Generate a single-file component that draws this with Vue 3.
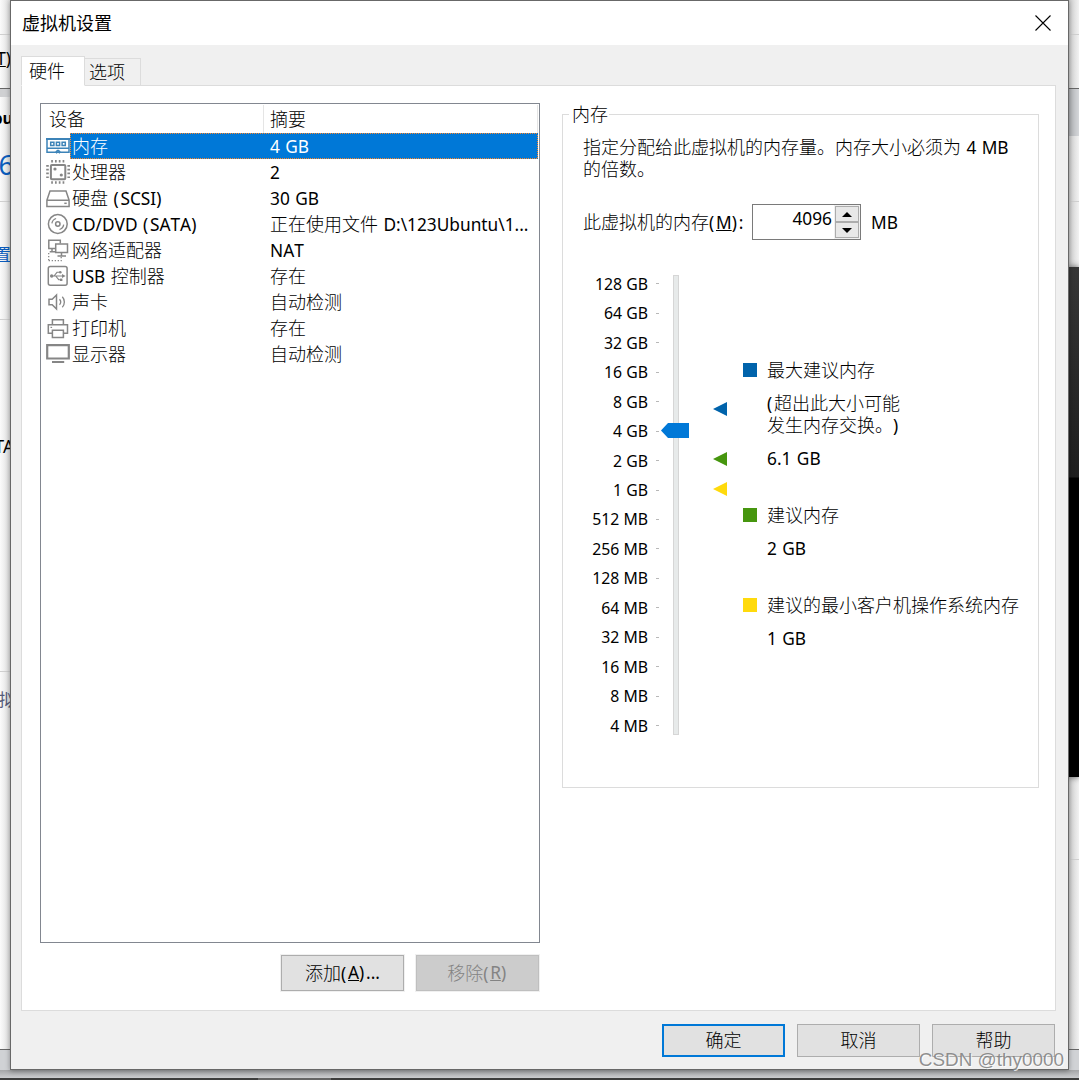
<script setup>
import { h, ref, computed } from 'vue';

const runClass = (part) => {
  if (/^[()]$/.test(part)) return 'en paren';
  return /[\x20-\x7e]/.test(part) ? 'en' : 'zh';
};

// latin and CJK runs use different faces and sizes
const Mixed = ({ text }) =>
  h(
    'span',
    { class: 'mixed' },
    text
      .split(/([()]|[\x20-\x27\x2a-\x7e]+)/)
      .filter(Boolean)
      .map((part) => h('span', { class: runClass(part) }, part))
  );
Mixed.props = ['text'];

const devices = [
  { id: 'memory', name: '内存', summary: '4 GB' },
  { id: 'cpu', name: '处理器', summary: '2' },
  { id: 'disk', name: '硬盘 (SCSI)', summary: '30 GB' },
  { id: 'cd', name: 'CD/DVD (SATA)', summary: '正在使用文件 D:\\123Ubuntu\\1...' },
  { id: 'network', name: '网络适配器', summary: 'NAT' },
  { id: 'usb', name: 'USB 控制器', summary: '存在' },
  { id: 'sound', name: '声卡', summary: '自动检测' },
  { id: 'printer', name: '打印机', summary: '存在' },
  { id: 'display', name: '显示器', summary: '自动检测' },
];

const sizes = [
  '128 GB', '64 GB', '32 GB', '16 GB', '8 GB', '4 GB', '2 GB', '1 GB',
  '512 MB', '256 MB', '128 MB', '64 MB', '32 MB', '16 MB', '8 MB', '4 MB',
];

const markers = [
  { color: '#0063ab', top: 127 },
  { color: '#46960e', top: 177 },
  { color: '#ffda0c', top: 207 },
];

const selected = ref('memory');
const memory = ref(4096);

const thumbStyle = computed(() => {
  const step = 17 - Math.log2(memory.value);
  return { top: `${Math.round(step * 29.47 + 0.6)}px` };
});

const changeMemory = (delta) => {
  memory.value = Math.min(131072, Math.max(4, memory.value + delta));
};
</script>

<template>
  <div class="desktop">
    <div class="behind left">
      <i class="rule" style="top: 34px"></i>
      <i class="rule dark" style="top: 88px"></i>
      <i class="band narrow"></i>
      <span class="peek menu"><u>T</u>)</span>
      <span class="peek bold">bu</span>
      <span class="peek six">6</span>
      <i class="rule" style="top: 201px"></i>
      <span class="peek link">置</span>
      <i class="rule" style="top: 319px"></i>
      <span class="peek sata">TA</span>
      <i class="rule" style="top: 671px"></i>
      <span class="peek nav">拟</span>
    </div>
    <div class="behind right">
      <i class="rule" style="top: 34px"></i>
      <i class="rule dark" style="top: 88px"></i>
      <i class="band"></i>
      <i class="rule" style="top: 201px"></i>
      <i class="screen"></i>
      <i class="rule" style="top: 859px"></i>
    </div>
    <div class="statusbar"></div>
    <div class="taskbar"><i></i></div>

    <div class="dialog">
      <header class="titlebar">
        <span class="title">虚拟机设置</span>
        <svg class="close" width="16" height="16" viewBox="0 0 16 16">
          <path d="M.5 .5 15.5 15.5M15.5 .5 .5 15.5" stroke="#000" stroke-width="1.1" />
        </svg>
      </header>

      <div class="tabs">
        <div class="tab active"><Mixed text="硬件" /></div>
        <div class="tab"><Mixed text="选项" /></div>
      </div>

      <main class="panel">
        <section class="hardware">
          <div class="list">
            <div class="list-head">
              <div class="col-name"><Mixed text="设备" /></div>
              <div class="col-summary"><Mixed text="摘要" /></div>
            </div>
            <div
              v-for="device in devices"
              :key="device.id"
              class="row"
              :class="{ selected: selected === device.id }"
              @click="selected = device.id"
            >
              <svg class="icon" width="24" height="26" viewBox="0 0 24 26" fill="none" stroke="#868686" stroke-width="1.5">
                <g v-if="device.id === 'memory'" stroke="#3c83b8">
                  <path d="M0 6h24" stroke-width="2" />
                  <path d="M1 6v13.2h8.5l2 -1.7h1l2 1.7H23V6M1 15.2h22" />
                  <path d="M4.7 9.3h3.2v3.2H4.7zM10.4 9.3h3.2v3.2h-3.2zM16.1 9.3h3.2v3.2h-3.2z" />
                  <path d="M10 20.2l2-1.5 2 1.5" />
                </g>
                <g v-else-if="device.id === 'cpu'">
                  <rect x="4.9" y="5.9" width="14.4" height="14.4" rx="1" stroke-width="2" />
                  <path d="M5.2 2.2h14.5M5.2 23.5h14.5" stroke-width="2.6" stroke-dasharray="1.7 2.1" />
                  <path d="M1.5 6v14.5M22.7 6v14.5" stroke-width="2.6" stroke-dasharray="1.7 2.1" />
                  <circle cx="9" cy="10" r="1.6" fill="#868686" stroke="none" />
                  <circle cx="15.3" cy="16" r="1.6" fill="#868686" stroke="none" />
                </g>
                <g v-else-if="device.id === 'disk'">
                  <path d="M.9 15.2 4 6h16l3.1 9.2v6.3H.9zM.9 15.2h22.2" />
                  <path d="M18.3 18.3h2.4" />
                </g>
                <g v-else-if="device.id === 'cd'">
                  <circle cx="11.8" cy="13" r="9.4" />
                  <circle cx="11.8" cy="13" r="2.2" />
                  <path d="M5.9 12.3a6 6 0 0 1 4.2-4.8M17.7 13.7a6 6 0 0 1-4.2 4.8" stroke-width="1.3" />
                </g>
                <g v-else-if="device.id === 'network'">
                  <path d="M9 11.5H2.8V3.2h11.5v3.2M6 11.5v3.2M3.7 14.7H9" />
                  <path d="M9.7 6.9h11.8v8.5H9.7zM15.5 15.5v3M11.5 19h8.5" />
                  <path d="M2.7 16v8M2.7 23.7h12.5v-4" stroke-width="1.3" stroke-dasharray="1.3 1.7" />
                </g>
                <g v-else-if="device.id === 'usb'">
                  <rect x="2.3" y="3.4" width="18.8" height="18.8" rx="2" />
                  <path d="M4.6 13h12M8 13l3-3.7h3.2M9.7 13l3 3.7h2.4" stroke-width="1.1" />
                  <path d="M16 11l3.6 2-3.6 2z" fill="#868686" stroke="none" />
                  <circle cx="5.7" cy="13" r="1.7" fill="#868686" stroke="none" />
                  <circle cx="14.3" cy="9.3" r="1.3" fill="#868686" stroke="none" />
                  <path d="M14 15.6h2.4V18H14z" fill="#868686" stroke="none" />
                </g>
                <g v-else-if="device.id === 'sound'">
                  <path d="M3 10.2h3.2L10.5 6v14l-4.3-4.2H3z" />
                  <path d="M13.5 10.3a4 4 0 0 1 0 5.4M16.3 7.8a7.6 7.6 0 0 1 0 10.4" stroke-width="1.3" />
                </g>
                <g v-else-if="device.id === 'printer'">
                  <path d="M6.4 9.7V4.8h11v4.9M6.4 18.3H2.3V9.7h19.2v8.6h-4.1" />
                  <path d="M6.4 15.3h11v7.1h-11z" />
                  <path d="M4.5 12.4h1.6" stroke-width="1.2" />
                </g>
                <g v-else>
                  <path d="M1.2 4.2h21.6v13.3H1.2z" stroke-width="2.2" />
                  <path d="M6 21h12.2" stroke-width="2" />
                </g>
              </svg>
              <div class="row-body">
                <div class="row-name"><Mixed :text="device.name" /></div>
                <div class="row-summary"><Mixed :text="device.summary" /></div>
              </div>
            </div>
          </div>
          <div class="list-actions">
            <button type="button" class="btn tall">
              <Mixed text="添加(" /><u class="en">A</u><Mixed text=")..." />
            </button>
            <button type="button" class="btn tall disabled">
              <Mixed text="移除(" /><u class="en">R</u><Mixed text=")" />
            </button>
          </div>
        </section>

        <section class="group">
          <div class="group-title"><Mixed text="内存" /></div>
          <div class="hint">
            <Mixed text="指定分配给此虚拟机的内存量。内存大小必须为 4 MB" /><br />
            <Mixed text="的倍数。" />
          </div>
          <div class="memory-line">
            <label><Mixed text="此虚拟机的内存(" /><u class="en">M</u><Mixed text="):" /></label>
            <div class="spinner">
              <span class="value en">{{ memory }}</span>
              <div class="arrows">
                <button type="button" @click="changeMemory(4)"><i class="up"></i></button>
                <button type="button" @click="changeMemory(-4)"><i class="down"></i></button>
              </div>
            </div>
            <span class="en unit">MB</span>
          </div>

          <div class="scale">
            <div class="labels">
              <div v-for="size in sizes" :key="size" class="size">{{ size }}<i></i></div>
            </div>
            <div class="slider">
              <div class="track"></div>
              <svg class="thumb" :style="thumbStyle" width="28" height="15" viewBox="0 0 28 15">
                <path d="M0 7.5 7 0h21v15H7z" fill="#0078d7" />
              </svg>
            </div>
            <div class="markers">
              <svg
                v-for="marker in markers"
                :key="marker.color"
                :style="{ top: `${marker.top}px` }"
                width="14"
                height="14"
                viewBox="0 0 14 14"
              >
                <path d="M0 7 14 0v14z" :fill="marker.color" />
              </svg>
            </div>
            <div class="legend">
              <div class="entry max">
                <i></i>
                <div>
                  <p><Mixed text="最大建议内存" /></p>
                  <p class="note"><Mixed text="(超出此大小可能" /><br /><Mixed text="发生内存交换。)" /></p>
                  <p><Mixed text="6.1 GB" /></p>
                </div>
              </div>
              <div class="entry advised">
                <i></i>
                <div>
                  <p><Mixed text="建议内存" /></p>
                  <p><Mixed text="2 GB" /></p>
                </div>
              </div>
              <div class="entry min">
                <i></i>
                <div>
                  <p><Mixed text="建议的最小客户机操作系统内存" /></p>
                  <p><Mixed text="1 GB" /></p>
                </div>
              </div>
            </div>
          </div>
        </section>
      </main>

      <footer class="footer">
        <button type="button" class="btn primary"><Mixed text="确定" /></button>
        <button type="button" class="btn"><Mixed text="取消" /></button>
        <button type="button" class="btn"><Mixed text="帮助" /></button>
      </footer>
    </div>

    <div class="watermark">CSDN @thy0000</div>
  </div>
</template>

<style>
.mixed {
  white-space: pre;
}

.zh {
  font: 300 18px/16px "Noto Sans CJK SC", sans-serif;
  text-spacing-trim: space-all;
}

.en {
  font: 17.3px/16px "Noto Sans", sans-serif;
  font-kerning: none;
  word-spacing: 0.9px;
  white-space: pre;
}

.paren {
  letter-spacing: 1.8px;
}
</style>

<style scoped>
.desktop {
  position: relative;
  width: 1079px;
  height: 1080px;
  overflow: hidden;
  background: #fff;
  color: #000;
  font: 17.3px/22px "Noto Sans", "Noto Sans CJK SC", sans-serif;
}

/* window partly visible behind the dialog */
.behind {
  position: absolute;
  top: 0;
  width: 11px;
  height: 1049px;
  overflow: hidden;
}

.behind.left {
  left: 0;
  background: linear-gradient(90deg, #fbfbfb, #dadada);
}

.behind.right {
  right: 0;
  background: linear-gradient(90deg, #c8c8c8, #f2f2f2);
}

.rule {
  position: absolute;
  left: 0;
  width: 100%;
  height: 1px;
  background: #cfcfcf;
}

.rule.dark {
  background: #666;
}

.band {
  position: absolute;
  top: 89px;
  width: 100%;
  height: 47px;
  background: linear-gradient(90deg, #a9abae, #d5d7da);
}

.band.narrow {
  height: 8px;
  background: #cfd0d2;
}

.screen {
  position: absolute;
  top: 267px;
  width: 100%;
  height: 510px;
  background: linear-gradient(#363636, #1e1e1e 210px, #000 211px);
  box-shadow: 0 0 6px #555;
}

.peek {
  position: absolute;
  right: 0;
  white-space: nowrap;
}

.peek.menu {
  top: 48px;
}

.peek.bold {
  top: 107px;
  right: -2px;
  font-size: 16px;
  font-weight: 700;
}

.peek.six {
  top: 150px;
  right: -3px;
  font-size: 27px;
  line-height: 30px;
  color: #0b5cbc;
}

.peek.link {
  top: 244px;
  right: 0;
  color: #0b5cbc;
}

.peek.sata {
  top: 436px;
  right: -3px;
}

.peek.nav {
  top: 689px;
  right: -5px;
  color: #555a78;
}

.statusbar {
  position: absolute;
  top: 1049px;
  left: 0;
  right: 0;
  height: 29px;
  box-sizing: border-box;
  border-top: 1px solid #666;
  background: linear-gradient(#d0d2d5 20px, #a4a5a7 20px, #cbcccf);
}

.taskbar {
  position: absolute;
  top: 1078px;
  left: 0;
  right: 0;
  height: 2px;
  background: #3d3d3d;
}

.taskbar i {
  display: block;
  width: 73px;
  height: 2px;
  margin-left: 258px;
  background: #656565;
}

.dialog {
  position: absolute;
  top: 0;
  left: 10px;
  width: 1059px;
  height: 1070px;
  box-sizing: border-box;
  display: flex;
  flex-direction: column;
  border: 1px solid #686868;
  background: #f0f0f0;
  box-shadow: 0 1px 5px rgba(0, 0, 0, 0.35);
}

.titlebar {
  box-sizing: border-box;
  height: 44px;
  display: flex;
  align-items: center;
  justify-content: space-between;
  padding: 0 17px 1px 11px;
  background: #fff;
}

.title {
  margin-top: -2px;
  font: 18px/24px "Noto Sans CJK SC", sans-serif;
}

.tabs {
  display: flex;
  align-items: flex-end;
  height: 30px;
  margin: 11px 0 0 10px;
}

.tab {
  box-sizing: border-box;
  width: 56px;
  height: 28px;
  padding: 3px 0 0 4px;
  border: 1px solid #dcdcdc;
  border-left: none;
}

.tab.active {
  position: relative;
  z-index: 1;
  width: 64px;
  height: 30px;
  padding: 4px 0 0 7px;
  border-left: 1px solid #dcdcdc;
  border-bottom-color: #fff;
  background: #fff;
}

.panel {
  box-sizing: border-box;
  display: flex;
  gap: 22px;
  width: 1035px;
  height: 926px;
  margin: -1px 0 0 10px;
  padding: 17px 16px 0 18px;
  border: 1px solid #dcdcdc;
  background: #fff;
}

.hardware {
  width: 500px;
}

.list {
  box-sizing: border-box;
  height: 840px;
  border: 1px solid #828790;
}

.list-head {
  display: flex;
  height: 29px;
  line-height: 29px;
}

.col-name {
  box-sizing: border-box;
  width: 223px;
  margin-top: 1px;
  padding-left: 8px;
  border-right: 1px solid #e5e5e5;
}

.col-summary {
  box-sizing: border-box;
  width: 274px;
  margin-top: 1px;
  padding-left: 6px;
  border-right: 1px solid #e5e5e5;
}

.row {
  display: flex;
  height: 26px;
  line-height: 26px;
}

.icon {
  flex: none;
  margin-left: 5px;
}

.row-body {
  box-sizing: border-box;
  display: flex;
  width: 468px;
  padding: 1px 1px 0;
}

.selected .row-body {
  background:
    repeating-linear-gradient(90deg, #ff8728 0 1px, #0078d7 1px 2px) 0 0 / 100% 1px no-repeat,
    repeating-linear-gradient(90deg, #ff8728 0 1px, #0078d7 1px 2px) 0 100% / 100% 1px no-repeat,
    repeating-linear-gradient(#ff8728 0 1px, #0078d7 1px 2px) 0 0 / 1px 100% no-repeat,
    repeating-linear-gradient(#ff8728 0 1px, #0078d7 1px 2px) 100% 0 / 1px 100% no-repeat,
    #0078d7;
  color: #fff;
}

.row-name {
  width: 198px;
  padding-left: 1px;
}

.list-actions {
  display: flex;
  justify-content: flex-end;
  gap: 12px;
  margin: 12px 1px 0 0;
}

.btn {
  box-sizing: border-box;
  display: flex;
  align-items: center;
  justify-content: center;
  width: 123px;
  height: 33px;
  padding: 0 0 1px;
  border: 1px solid #adadad;
  background: #e1e1e1;
  color: #000;
}

.btn.tall {
  height: 36px;
  padding: 0;
  outline: 1px solid #f0f0f0;
}

.btn.disabled {
  border-color: #bfbfbf;
  background: #ccc;
  color: #838383;
}

.btn.primary {
  border: 2px solid #0078d7;
}

.group {
  position: relative;
  box-sizing: border-box;
  width: 477px;
  height: 674px;
  margin-top: 11px;
  padding: 22px 0 0 20px;
  border: 1px solid #dcdcdc;
}

.group-title {
  position: absolute;
  top: -11px;
  left: 6px;
  padding: 0 1px 0 3px;
  background: #fff;
}

.hint {
  height: 67px;
}

.memory-line {
  display: flex;
  align-items: center;
  height: 36px;
}

.memory-line label {
  width: 169px;
  padding-top: 2px;
}

.memory-line .unit {
  margin-top: 2px;
}

.spinner {
  box-sizing: border-box;
  display: flex;
  justify-content: flex-end;
  width: 109px;
  height: 36px;
  margin-right: 10px;
  border: 1px solid #7a7a7a;
}

.spinner .value {
  margin: 6px 2px 0 0;
}

.arrows {
  display: flex;
  flex-direction: column;
  width: 26px;
  background: #f0f0f0;
}

.arrows button {
  display: flex;
  flex: 1;
  align-items: center;
  justify-content: center;
  margin: 1px;
  padding: 0;
  border: 1px solid #acacac;
  background: #e8e8e8;
}

.arrows button + button {
  margin-top: -1px;
}

.up,
.down {
  border: 5px solid transparent;
}

.up {
  border-top: none;
  border-bottom-color: #000;
}

.down {
  border-bottom: none;
  border-top-color: #000;
}

.scale {
  display: flex;
  height: 460px;
  margin-top: 35px;
}

.labels {
  width: 77px;
  margin-top: -6px;
}

.size {
  display: flex;
  align-items: center;
  justify-content: flex-end;
  gap: 8px;
  height: 29.47px;
  margin-right: 1px;
  font-size: 15.8px;
}

.size i {
  width: 3px;
  height: 1px;
  background: #b8b8b8;
}

.slider {
  position: relative;
  width: 28px;
  margin-left: 1px;
}

.track {
  box-sizing: border-box;
  width: 6px;
  height: 460px;
  margin-left: 12px;
  border: 1px solid #d6d6d6;
  background: #e7eaea;
}

.thumb {
  position: absolute;
  left: 0;
}

.markers {
  position: relative;
  width: 14px;
  margin-left: 24px;
}

.markers svg {
  position: absolute;
  left: 0;
}

.legend {
  margin: 85px 0 0 16px;
}

.entry {
  display: flex;
  gap: 10px;
}

.entry i {
  flex: none;
  width: 14px;
  height: 14px;
  margin-top: 3px;
  background: #0063ab;
}

.entry p {
  height: 22px;
  margin: 0 0 11px;
  white-space: nowrap;
}

.entry .note {
  height: 44px;
}

.entry.max {
  height: 145px;
}

.entry.advised {
  height: 90px;
}

.entry.advised i {
  background: #46960e;
}

.entry.min i {
  background: #ffda0c;
}

.footer {
  display: flex;
  justify-content: flex-end;
  gap: 12px;
  margin: 13px 13px 0 0;
}

.watermark {
  position: absolute;
  right: 15px;
  bottom: 8px;
  font: 18.9px/24px "Liberation Sans", sans-serif;
  color: rgba(125, 125, 125, 0.85);
  text-shadow: 1px 1px 0 rgba(255, 255, 255, 0.8);
}
</style>
